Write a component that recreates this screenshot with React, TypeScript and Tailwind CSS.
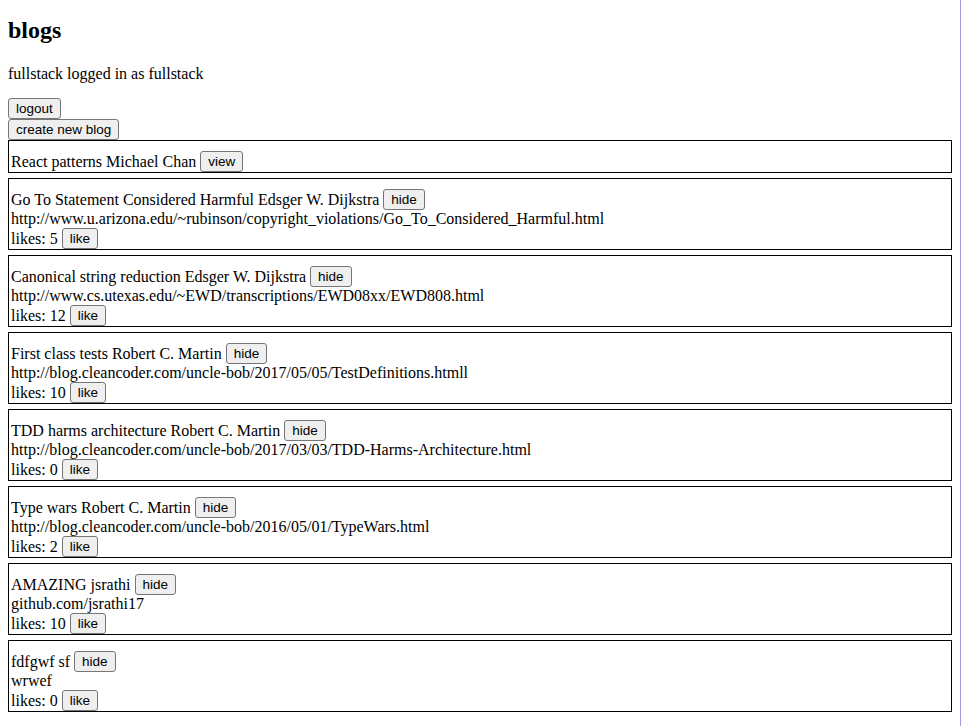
import React from "react";

type Blog = { title: string; author: string; url: string; likes: number; open: boolean };

const blogs: Blog[] = [
  { title: "React patterns", author: "Michael Chan", url: "https://reactpatterns.com/", likes: 7, open: false },
  { title: "Go To Statement Considered Harmful", author: "Edsger W. Dijkstra", url: "http://www.u.arizona.edu/~rubinson/copyright_violations/Go_To_Considered_Harmful.html", likes: 5, open: true },
  { title: "Canonical string reduction", author: "Edsger W. Dijkstra", url: "http://www.cs.utexas.edu/~EWD/transcriptions/EWD08xx/EWD808.html", likes: 12, open: true },
  { title: "First class tests", author: "Robert C. Martin", url: "http://blog.cleancoder.com/uncle-bob/2017/05/05/TestDefinitions.htmll", likes: 10, open: true },
  { title: "TDD harms architecture", author: "Robert C. Martin", url: "http://blog.cleancoder.com/uncle-bob/2017/03/03/TDD-Harms-Architecture.html", likes: 0, open: true },
  { title: "Type wars", author: "Robert C. Martin", url: "http://blog.cleancoder.com/uncle-bob/2016/05/01/TypeWars.html", likes: 2, open: true },
  { title: "AMAZING", author: "jsrathi", url: "github.com/jsrathi17", likes: 10, open: true },
  { title: "fdfgwf", author: "sf", url: "wrwef", likes: 0, open: true },
];

function Btn({ children }: { children: React.ReactNode }) {
  return (
    <button className="inline-block align-baseline bg-[#efefef] border border-[#767676] rounded-[3px] px-[7px] py-[2px] text-[13.5px] leading-[15px] text-black font-['Liberation_Sans',Arial,sans-serif]">
      {children}
    </button>
  );
}

export default function App() {
  return (
    <div className="flex min-h-[726px] bg-white">
      <div className="w-[960px] px-2 pb-2 text-[16px] text-black font-['Liberation_Serif','Times_New_Roman',serif]">
        <h2 className="text-[24px] font-bold mt-[17px] mb-[18px] leading-[27px]">blogs</h2>
        <p className="my-0 mb-3">fullstack logged in as fullstack</p>
        <div className="leading-[0]">
          <Btn>logout</Btn>
        </div>
        <div className="leading-[0]">
          <Btn>create new blog</Btn>
        </div>
        {blogs.map((b, i) => (
          <div key={i} className="border border-black pt-[10px] pl-[2px] mb-[5px]">
            <div className="h-[21px] flex items-center gap-[4px]">
              <span>
                {b.title} {b.author}
              </span>
              <Btn>{b.open ? "hide" : "view"}</Btn>
            </div>
            {b.open && (
              <>
                <div className="h-[18px] leading-[18px]">{b.url}</div>
                <div className="h-[21px] flex items-center gap-[4px]">
                  <span>likes: {b.likes}</span>
                  <Btn>like</Btn>
                </div>
              </>
            )}
          </div>
        ))}
      </div>
      <div className="w-px bg-[#9c9ce3]" />
    </div>
  );
}
